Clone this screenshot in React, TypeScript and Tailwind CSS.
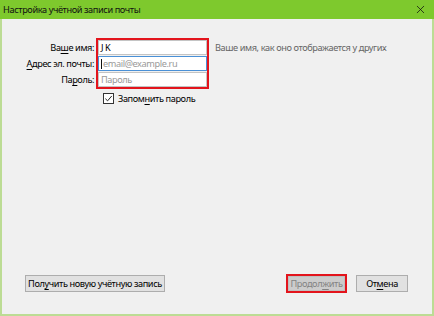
import { X } from 'lucide-react'

const font = { fontFamily: '"Noto Sans", sans-serif' }

function Key({ children }: { children: string }) {
  return <span className="underline decoration-[1px] underline-offset-[2px]">{children}</span>
}

function Input({ value, placeholder, focused }: { value?: string; placeholder?: string; focused?: boolean }) {
  return (
    <div
      className={
        'flex h-[15px] items-center border bg-white px-[2px] leading-none ' +
        (focused ? 'border-[#4a90d6]' : 'border-[#c4c4c4]')
      }
    >
      {focused ? <span className="mr-px h-[10px] w-px bg-[#111]" /> : null}
      {value ? <span className="text-[#000]">{value}</span> : <span className="text-[#999]">{placeholder}</span>}
    </div>
  )
}

export default function App() {
  return (
    <div className="flex h-[316px] w-[434px] flex-col bg-[#f0f0f0] text-[9.2px] tracking-[-0.4px] text-[#000]" style={font}>
      <div className="flex h-[19px] items-center justify-between bg-[#7ec92d] pl-[3px] pr-[7px] text-[#111]">
        <span>Настройка учётной записи почты</span>
        <X className="h-[13px] w-[13px]" strokeWidth={1.4} />
      </div>
      <div className="flex flex-1 flex-col border-x-2 border-b-2 border-[#bcdc94] pt-[19px]">
        <div className="flex items-start">
          <div className="flex w-[94px] flex-col gap-px whitespace-nowrap pt-[2px] pr-[2px] text-right">
            <div className="h-[15px] leading-[15px]">Ва<Key>ш</Key>е имя:</div>
            <div className="h-[15px] leading-[15px]"><Key>А</Key>дрес эл. почты:</div>
            <div className="h-[15px] leading-[15px]">Па<Key>р</Key>оль:</div>
          </div>
          <div className="flex w-[113px] flex-col gap-px border-2 border-[#e3141c]">
            <Input value="J K" />
            <Input placeholder="email@example.ru" focused />
            <Input placeholder="Пароль" />
          </div>
          <div className="whitespace-nowrap pl-[6px] pt-[2px] leading-[15px] text-[#666]">Ваше имя, как оно отображается у других</div>
        </div>
        <label className="ml-[101px] mt-[3px] flex items-center gap-[4px]">
          <span className="flex h-[11px] w-[11px] items-center justify-center border border-[#333] bg-white">
            <svg viewBox="0 0 10 10" className="h-[9px] w-[9px]">
              <path d="M1.5 5.2 L4 7.6 L8.6 2.2" fill="none" stroke="#222" strokeWidth="1.1" />
            </svg>
          </span>
          <span>Запом<Key>н</Key>ить пароль</span>
        </label>
        <div className="mt-auto mb-[21px] flex items-center pl-[23px] pr-[24px]">
          <button className="h-[17px] w-[140px] whitespace-nowrap border border-[#adadad] bg-[#e1e1e1] text-center leading-[15px]" type="button">
            Пол<Key>у</Key>чить новую учётную запись
          </button>
          <div className="ml-auto flex h-[19px] w-[61px] items-center justify-center border-2 border-[#e3141c]">
            <button className="h-[15px] w-[57px] whitespace-nowrap border border-[#bfbfbf] bg-[#cccccc] text-center leading-[13px] text-[#838383]" type="button">
              Продол<Key>ж</Key>ить
            </button>
          </div>
          <button className="ml-[9px] h-[17px] w-[52px] whitespace-nowrap border border-[#adadad] bg-[#e1e1e1] text-center leading-[15px]" type="button">
            От<Key>м</Key>ена
          </button>
        </div>
      </div>
    </div>
  )
}
